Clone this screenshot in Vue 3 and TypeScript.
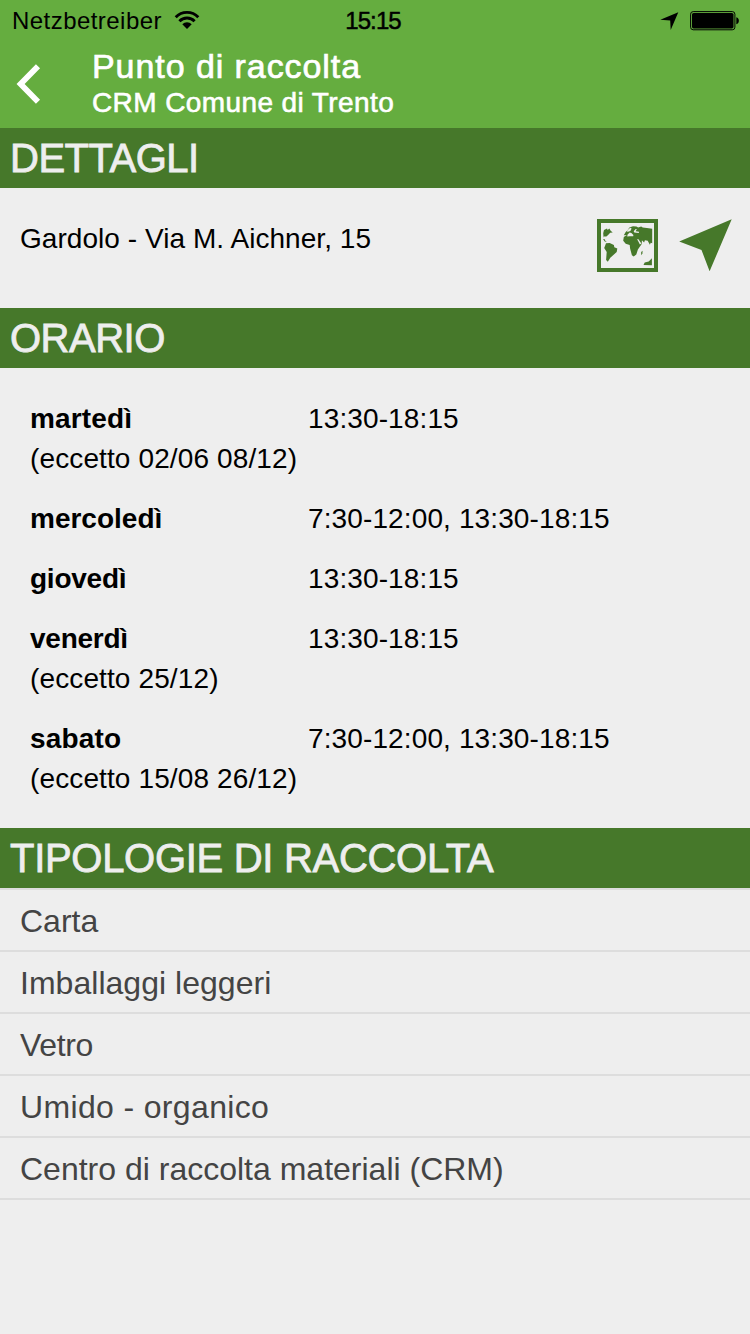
<script setup lang="ts">
interface OpeningDay {
  day: string
  hours: string
  except?: string
  tracking: number
}

interface WasteType {
  name: string
  tracking: number
}

const schedule: OpeningDay[] = [
  { day: 'martedì', hours: '13:30-18:15', except: '(eccetto 02/06 08/12)', tracking: 0.15 },
  { day: 'mercoledì', hours: '7:30-12:00, 13:30-18:15', tracking: 0 },
  { day: 'giovedì', hours: '13:30-18:15', tracking: -0.25 },
  { day: 'venerdì', hours: '13:30-18:15', except: '(eccetto 25/12)', tracking: -0.25 },
  { day: 'sabato', hours: '7:30-12:00, 13:30-18:15', except: '(eccetto 15/08 26/12)', tracking: 0.15 },
]

const wasteTypes: WasteType[] = [
  { name: 'Carta', tracking: 0 },
  { name: 'Imballaggi leggeri', tracking: 0.03 },
  { name: 'Vetro', tracking: -0.35 },
  { name: 'Umido - organico', tracking: 0.35 },
  { name: 'Centro di raccolta materiali (CRM)', tracking: 0 },
]
</script>

<template>
  <main class="screen">
    <header class="header">
      <div class="status">
        <div class="carrier">
          <span>Netzbetreiber</span>
          <svg class="wifi" width="26" height="20" viewBox="0 0 26 20">
            <g fill="none" stroke="#000" stroke-width="2.9">
              <path d="M1.7 7.2a15.7 15.7 0 0 1 22.6 0" />
              <path d="M5.4 11.2a10.6 10.6 0 0 1 15.2 0" />
            </g>
            <path d="M8.3 14.2a6.6 6.6 0 0 1 9.4 0L13 19z" />
          </svg>
        </div>
        <span class="clock">15:15</span>
        <div class="indicators">
          <svg class="location" width="19" height="19" viewBox="0 0 19 19"><path d="M18.3.3 10.7 18 10.2 8.5.3 7.8z" /></svg>
          <svg width="50" height="20" viewBox="0 0 50 20">
            <rect x=".6" y=".6" width="44.3" height="18.2" rx="2.6" fill="none" stroke="#000" stroke-width="1" />
            <rect x="2" y="2" width="41.5" height="15.4" rx="1.6" />
            <path d="M46.3 6.2c3.4.4 3.4 6.6 0 7z" />
          </svg>
        </div>
      </div>
      <div class="nav">
        <svg class="back" width="28" height="42" viewBox="0 0 28 42">
          <path d="M23 3.2 5.6 21 23 38.8" fill="none" stroke="#fff" stroke-width="5.8" />
        </svg>
        <div class="titles">
          <h1>Punto di raccolta</h1>
          <p>CRM Comune di Trento</p>
        </div>
      </div>
    </header>

    <h2 class="bar dettagli">DETTAGLI</h2>
    <section class="address">
      <span>Gardolo - Via M. Aichner, 15</span>
      <div class="actions">
        <svg width="61" height="53" viewBox="0 0 61 53">
          <rect x="2" y="2" width="57" height="49" fill="none" stroke="#46782a" stroke-width="4" />
          <g fill="#46782a">
            <path d="M6.2 14.2 7 11l3-1.4.7 1.5 1.6-1.7 1.4 2.4 2 1.8-2.5.1-2.1 2.2-1.7 1.5-2.5.2-.3 1.1z" />
            <path d="m6 20 1.8.2.3 1.3 1.7 1.2-2-.2z" />
            <path d="m9 24.2 3.7-.3 4.2 2.2.4 2.2 3 1.3-.6 3.3-3.6 3.4-2.8 2.5-2.5 4-1.7-1.9.6-8-2.5-3.8 1-2.7z" />
            <path d="m26.8 16.2 1.9-3.2 1.7-1.4 2-3.1 3.6-1.2 3.4.3 1.8.8 3-.8 1.5 1 4.2.3 5.3.8v14.6l-1.5-.5-.8 1.9-2.2-4-2.8-.5-.8 2.4-2.2-2.3-.2 3.8-3.8 5.3-1.6 5-2.6 2-1.8-1.2-1.8-6.8-.4-3.5-4-1.2-2.5-2.9.6-3.9 3-2z" />
            <path d="m44.2 33 1.4-1.3-.2 2.7-1.2 1.8z" />
            <path d="m46.5 46 1.2-2.6 4-.8 3.2-3.4v7z" />
          </g>
          <g fill="#eee">
            <path d="m30.6 15.5 2.1-1.9 1.7.3 2 2-.2 1.4-3.3-.1-2.7.2z" />
            <path d="m30.3 11.2 2.9-2.5 1.4.8-1.2 2.5-3.2.9z" />
            <path d="m36.7 12.2 2-2.3 1.1.2-1.1 2.1 3.3.5-.2 1.2-4.5-.4z" />
            <path d="m40.2 20.3 2.7 5.2 1.5-1.1-3.2-4.5z" />
          </g>
        </svg>
        <svg width="53" height="53" viewBox="0 0 53 53"><path fill="#46782a" d="M52.7.2 30.6 52.3 22.5 31 .2 22.4z" /></svg>
      </div>
    </section>

    <h2 class="bar orario">ORARIO</h2>
    <section class="schedule">
      <div v-for="item in schedule" :key="item.day" class="day">
        <div class="row">
          <strong :style="{ letterSpacing: item.tracking + 'px' }">{{ item.day }}</strong>
          <span class="hours">{{ item.hours }}</span>
        </div>
        <p v-if="item.except">{{ item.except }}</p>
      </div>
    </section>

    <h2 class="bar tipologie">TIPOLOGIE DI RACCOLTA</h2>
    <ul class="types">
      <li v-for="type in wasteTypes" :key="type.name" :style="{ letterSpacing: type.tracking + 'px' }">{{ type.name }}</li>
    </ul>
  </main>
</template>

<style>
body {
  margin: 0;
  background: #eee;
}
</style>

<style scoped>
.screen {
  width: 750px;
  height: 1334px;
  overflow: hidden;
  background: #eee;
  color: #000;
  font-family: "Liberation Sans", Arial, sans-serif;
  font-size: 28px;
  line-height: 40px;
}
h1, h2, p, ul {
  margin: 0;
  padding: 0;
}
svg {
  display: block;
  flex: none;
}
.header {
  height: 128px;
  background: #65ad3f;
}
.status {
  display: grid;
  grid-template-columns: 1fr auto 1fr;
  align-items: center;
  box-sizing: border-box;
  height: 42px;
  padding: 0 10px 0 12px;
  font-size: 24px;
}
.carrier {
  display: flex;
  align-items: center;
  gap: 12px;
  letter-spacing: 0.45px;
}
.wifi {
  margin-top: -2px;
}
.clock {
  margin: 0 3px 0 -3px;
  letter-spacing: -0.9px;
  -webkit-text-stroke: 0.5px #000;
}
.indicators {
  display: flex;
  justify-content: flex-end;
  gap: 11px;
}
.location {
  margin-top: 1px;
}
.nav {
  display: flex;
  height: 86px;
  color: #fff;
}
.back {
  margin: 21px 0 0 15px;
}
.titles {
  padding: 5px 0 0 49px;
}
.titles h1 {
  font-size: 34px;
  font-weight: 400;
  line-height: 38px;
  letter-spacing: 0.93px;
  -webkit-text-stroke: 0.7px #fff;
}
.titles p {
  font-size: 28px;
  line-height: 36px;
  letter-spacing: 0.4px;
  -webkit-text-stroke: 0.6px #fff;
}
.bar {
  height: 60px;
  padding-left: 10px;
  background: #46782a;
  color: #eee;
  font-size: 40px;
  font-weight: 400;
  line-height: 61px;
  letter-spacing: -0.5px;
  -webkit-text-stroke: 0.8px #eee;
}
.tipologie {
  letter-spacing: -0.3px;
}
.address {
  display: flex;
  justify-content: space-between;
  height: 120px;
  padding: 31px 18px 0 20px;
  box-sizing: border-box;
  letter-spacing: 0.05px;
}
.actions {
  display: flex;
  gap: 21px;
}
.schedule {
  display: flex;
  flex-direction: column;
  gap: 20px;
  height: 460px;
  padding: 31px 30px 0;
  box-sizing: border-box;
  letter-spacing: 0.12px;
}
.row {
  display: flex;
}
.row strong {
  width: 278px;
}
.types {
  list-style: none;
  border-top: 2px solid #ddd;
  color: #444;
  font-size: 32px;
}
.types li {
  height: 60px;
  padding-left: 20px;
  border-bottom: 2px solid #ddd;
  line-height: 62px;
}
</style>
